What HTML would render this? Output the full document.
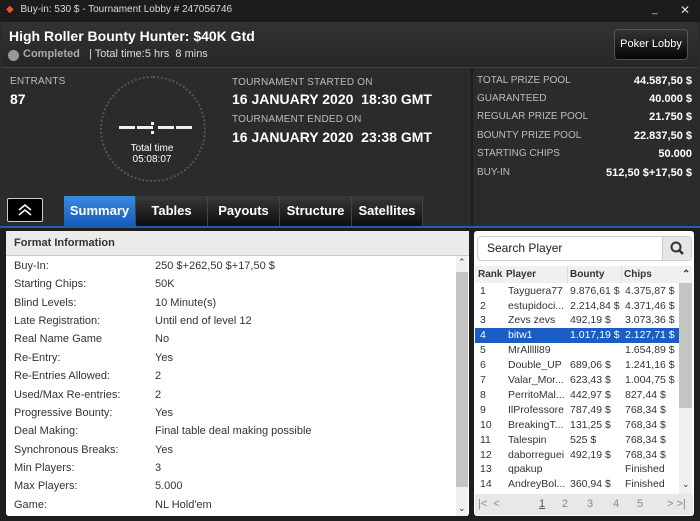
<!DOCTYPE html><html><head><style>
*{margin:0;padding:0;box-sizing:border-box}
body{width:700px;height:521px;background:#2b2b2b;font-family:"Liberation Sans",sans-serif;position:relative;overflow:hidden;color:#fff}
.a{position:absolute}
.lab{color:#bdbdbd;font-size:10px;letter-spacing:.2px}
.big{font-weight:bold;font-size:14px}
.rp div{position:absolute;left:477px;width:215px;font-size:10px;color:#bdbdbd}
.rp span{position:absolute;right:0;color:#fff;font-weight:bold;font-size:11px}
.tab{position:absolute;top:196px;height:30px;background:linear-gradient(#3a3a3a,#0d0d0d);font-weight:bold;font-size:13px;text-align:center;line-height:30px;border-right:1px solid #444}
.fr{position:absolute;left:14px;font-size:11px;color:#333;height:18px;line-height:18px}
.fr b{position:absolute;left:141px;font-weight:normal;white-space:nowrap}
.tr{position:absolute;left:475px;width:204px;height:15px;line-height:15px;font-size:10.5px;color:#333}
.tr span{position:absolute}
.d{position:absolute;top:126px;width:16px;height:3px;background:#eee}
</style></head><body>
<div class="a" style="left:0;top:0;width:700px;height:22px;background:#1c1c1c;font-size:10px;line-height:20px;color:#ddd"><span style="color:#e8572a;margin-left:6px">◆</span> <span style="margin-left:4px">Buy-in: 530 $ - Tournament Lobby # 247056746</span><span class="a" style="left:652px;top:0">_</span><span class="a" style="left:680px;top:0;font-size:12px">✕</span></div>
<div class="a" style="left:2px;top:22px;width:696px;height:46px;background:linear-gradient(#333,#262626);border-bottom:1px solid #444"></div>
<div class="a big" style="left:9px;top:28px;font-size:14px">High Roller Bounty Hunter: $40K Gtd</div>
<div class="a" style="left:8px;top:50px;width:11px;height:11px;border-radius:50%;background:#999"></div>
<div class="a" style="left:23px;top:48px;font-size:11px;color:#aaa;font-weight:bold">Completed</div>
<div class="a" style="left:89px;top:48px;font-size:11px;color:#ddd">| Total time:5 hrs &nbsp;8 mins</div>
<div class="a" style="left:614px;top:29px;width:74px;height:31px;border:1px solid #555;border-radius:4px;background:linear-gradient(#333,#050505);font-size:11px;text-align:center;line-height:29px">Poker Lobby</div>
<div class="a lab" style="left:10px;top:76px">ENTRANTS</div>
<div class="a big" style="left:10px;top:91px">87</div>
<div class="a" style="left:100px;top:76px;width:106px;height:106px;border:2px dotted #555;border-radius:50%"></div>
<div class="d" style="left:119px"></div>
<div class="d" style="left:137px"></div>
<div class="a" style="left:151px;top:122px;width:3px;height:3px;background:#eee"></div>
<div class="a" style="left:151px;top:131px;width:3px;height:3px;background:#eee"></div>
<div class="d" style="left:158px"></div>
<div class="d" style="left:176px"></div>
<div class="a" style="left:128px;top:143px;font-size:10px;text-align:center;width:48px;line-height:11px">Total time<br>05:08:07</div>
<div class="a lab" style="left:232px;top:77px">TOURNAMENT STARTED ON</div>
<div class="a big" style="left:232px;top:91px">16 JANUARY 2020 &nbsp;18:30 GMT</div>
<div class="a lab" style="left:232px;top:114px">TOURNAMENT ENDED ON</div>
<div class="a big" style="left:232px;top:129px">16 JANUARY 2020 &nbsp;23:38 GMT</div>
<div class="a" style="left:471px;top:68px;width:2px;height:160px;background:#1e1e1e"></div>
<div class="rp">
<div style="top:75px">TOTAL PRIZE POOL<span>44.587,50 $</span></div>
<div style="top:93px">GUARANTEED<span>40.000 $</span></div>
<div style="top:111px">REGULAR PRIZE POOL<span>21.750 $</span></div>
<div style="top:130px">BOUNTY PRIZE POOL<span>22.837,50 $</span></div>
<div style="top:148px">STARTING CHIPS<span>50.000</span></div>
<div style="top:167px">BUY-IN<span>512,50 $+17,50 $</span></div>
</div>
<div class="a" style="left:7px;top:198px;width:36px;height:24px;border:1px solid #ccc;border-radius:2px;background:#000"><svg width="34" height="22"><path d="M11 11l6-5 6 5M11 16l6-5 6 5" stroke="#fff" stroke-width="1.6" fill="none"/></svg></div>
<div class="tab" style="left:64px;width:72px;background:linear-gradient(#3a8ae0,#135cc0)">Summary</div>
<div class="tab" style="left:136px;width:72px">Tables</div>
<div class="tab" style="left:208px;width:72px">Payouts</div>
<div class="tab" style="left:280px;width:72px">Structure</div>
<div class="tab" style="left:352px;width:71px">Satellites</div>
<div class="a" style="left:0;top:226px;width:700px;height:2px;background:#1e5fa8"></div>
<div class="a" style="left:0;top:228px;width:700px;height:293px;background:#1e1e1e"></div>
<div class="a" style="left:6px;top:231px;width:463px;height:285px;background:#fff;border-radius:3px"></div>
<div class="a" style="left:6px;top:231px;width:463px;height:25px;background:#ebebeb;border-bottom:1px solid #ccc;font-size:11px;font-weight:bold;color:#333;line-height:24px;padding-left:8px">Format Information</div>
<div class="a" style="left:456px;top:256px;width:12px;height:260px;background:#f0f0f0"></div>
<div class="a" style="left:456px;top:272px;width:12px;height:215px;background:#c4c4c4"></div>
<div class="a" style="left:458px;top:257px;font-size:9px;color:#333">⌃</div>
<div class="a" style="left:458px;top:503px;font-size:9px;color:#333">⌄</div>
<div class="fr" style="top:257px">Buy-In:<b>250 $+262,50 $+17,50 $</b></div>
<div class="fr" style="top:275px">Starting Chips:<b>50K</b></div>
<div class="fr" style="top:294px">Blind Levels:<b>10 Minute(s)</b></div>
<div class="fr" style="top:312px">Late Registration:<b>Until end of level 12</b></div>
<div class="fr" style="top:330px">Real Name Game<b>No</b></div>
<div class="fr" style="top:349px">Re-Entry:<b>Yes</b></div>
<div class="fr" style="top:367px">Re-Entries Allowed:<b>2</b></div>
<div class="fr" style="top:386px">Used/Max Re-entries:<b>2</b></div>
<div class="fr" style="top:404px">Progressive Bounty:<b>Yes</b></div>
<div class="fr" style="top:422px">Deal Making:<b>Final table deal making possible</b></div>
<div class="fr" style="top:441px">Synchronous Breaks:<b>Yes</b></div>
<div class="fr" style="top:459px">Min Players:<b>3</b></div>
<div class="fr" style="top:477px">Max Players:<b>5.000</b></div>
<div class="fr" style="top:496px">Game:<b>NL Hold'em</b></div>
<div class="a" style="left:474px;top:231px;width:220px;height:285px;background:#fff;border-radius:3px"></div>
<div class="a" style="left:477px;top:236px;width:215px;height:25px;border:1px solid #ccc;border-radius:4px;background:#fff;font-size:12px;color:#222;line-height:23px;padding-left:9px">Search Player</div>
<div class="a" style="left:662px;top:237px;width:29px;height:23px;background:#e6e6e6;border-left:1px solid #ccc;border-radius:0 4px 4px 0"><svg width="29" height="23"><circle cx="13" cy="10" r="4.5" stroke="#333" stroke-width="2" fill="none"/><path d="M16 13l4 4" stroke="#333" stroke-width="2.5"/></svg></div>
<div class="a" style="left:475px;top:266px;width:217px;height:17px;background:#f0f0f0;font-size:10px;font-weight:bold;color:#333;line-height:17px">
<span class="a" style="left:3px">Rank</span><span class="a" style="left:31px">Player</span><span class="a" style="left:92px;border-left:1px solid #ddd;padding-left:2px">Bounty</span><span class="a" style="left:146px;border-left:1px solid #ddd;padding-left:2px">Chips</span><span class="a" style="left:207px">⌃</span></div>
<div class="a" style="left:679px;top:283px;width:13px;height:213px;background:#f0f0f0"></div>
<div class="a" style="left:679px;top:283px;width:13px;height:125px;background:#c4c4c4"></div>
<div class="a" style="left:682px;top:479px;font-size:9px;color:#333">⌄</div>
<div class="tr" style="top:284px"><span style="left:5px">1</span><span style="left:33px">Tayguera77</span><span style="left:95px">9.876,61 $</span><span style="left:150px">4.375,87 $</span></div>
<div class="tr" style="top:299px"><span style="left:5px">2</span><span style="left:33px">estupidoci...</span><span style="left:95px">2.214,84 $</span><span style="left:150px">4.371,46 $</span></div>
<div class="tr" style="top:313px"><span style="left:5px">3</span><span style="left:33px">Zevs zevs</span><span style="left:95px">492,19 $</span><span style="left:150px">3.073,36 $</span></div>
<div class="tr" style="top:328px;background:#1a5dc4;color:#fff"><span style="left:5px">4</span><span style="left:33px">bitw1</span><span style="left:95px">1.017,19 $</span><span style="left:150px">2.127,71 $</span></div>
<div class="tr" style="top:343px"><span style="left:5px">5</span><span style="left:33px">MrAlllll89</span><span style="left:150px">1.654,89 $</span></div>
<div class="tr" style="top:358px"><span style="left:5px">6</span><span style="left:33px">Double_UP</span><span style="left:95px">689,06 $</span><span style="left:150px">1.241,16 $</span></div>
<div class="tr" style="top:373px"><span style="left:5px">7</span><span style="left:33px">Valar_Mor...</span><span style="left:95px">623,43 $</span><span style="left:150px">1.004,75 $</span></div>
<div class="tr" style="top:388px"><span style="left:5px">8</span><span style="left:33px">PerritoMal...</span><span style="left:95px">442,97 $</span><span style="left:150px">827,44 $</span></div>
<div class="tr" style="top:403px"><span style="left:5px">9</span><span style="left:33px">IlProfessore</span><span style="left:95px">787,49 $</span><span style="left:150px">768,34 $</span></div>
<div class="tr" style="top:418px"><span style="left:5px">10</span><span style="left:33px">BreakingT...</span><span style="left:95px">131,25 $</span><span style="left:150px">768,34 $</span></div>
<div class="tr" style="top:433px"><span style="left:5px">11</span><span style="left:33px">Talespin</span><span style="left:95px">525 $</span><span style="left:150px">768,34 $</span></div>
<div class="tr" style="top:448px"><span style="left:5px">12</span><span style="left:33px">daborreguei</span><span style="left:95px">492,19 $</span><span style="left:150px">768,34 $</span></div>
<div class="tr" style="top:462px"><span style="left:5px">13</span><span style="left:33px">qpakup</span><span style="left:150px">Finished</span></div>
<div class="tr" style="top:477px"><span style="left:5px">14</span><span style="left:33px">AndreyBol...</span><span style="left:95px">360,94 $</span><span style="left:150px">Finished</span></div>
<div class="a" style="left:475px;top:494px;width:218px;height:21px;background:#e8e8e8;font-size:11px;color:#888;line-height:21px">
<span class="a" style="left:3px">|&lt; &nbsp;&lt;</span><span class="a" style="left:64px;color:#555;text-decoration:underline">1</span><span class="a" style="left:87px">2</span><span class="a" style="left:112px">3</span><span class="a" style="left:138px">4</span><span class="a" style="left:162px">5</span><span class="a" style="left:192px">&gt; &gt;|</span></div>
</body></html>
